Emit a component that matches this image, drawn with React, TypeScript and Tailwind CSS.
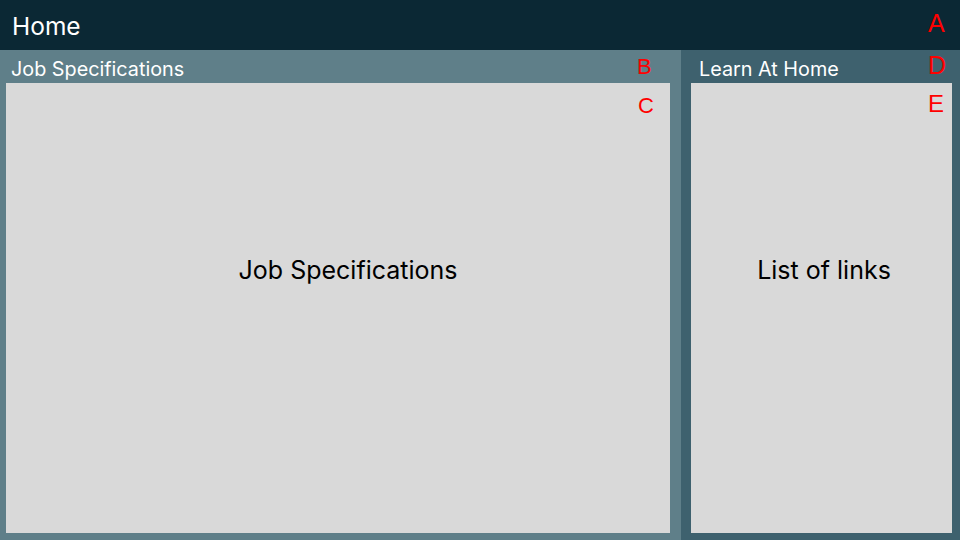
const label = "absolute leading-none text-[#ff0000] font-['Liberation_Sans',sans-serif]";

export default function App() {
  return (
    <div className="flex h-[540px] w-[960px] flex-col font-['Inter',sans-serif]">
      <header className="relative flex h-[50px] items-center bg-[#0b2834] pl-3 pt-[2px] text-[24.5px] text-white">
        Home
        <span className={`${label} left-[928px] top-[11px] text-[25px]`}>A</span>
      </header>
      <div className="flex flex-1">
        <section className="relative flex w-[681px] flex-col bg-[#5f7f89] pb-[7px] pl-[6px] pr-[11px]">
          <h2 className="h-[33px] pl-[5px] pt-[10px] text-[19.8px] leading-none text-white">Job Specifications</h2>
          <div className="relative flex-1 bg-[#d9d9d9] pl-[20px] pt-[169px] text-center text-[25px] text-black">
            Job Specifications
            <span className={`${label} left-[632px] top-[12px] text-[22px]`}>C</span>
          </div>
          <span className={`${label} left-[637px] top-[6px] text-[22px]`}>B</span>
        </section>
        <section className="relative flex flex-1 flex-col bg-[#3e616e] pb-[7px] pl-[10px] pr-[8px]">
          <h2 className="h-[33px] pl-[8px] pt-[10px] text-[19.8px] leading-none text-white">Learn At Home</h2>
          <div className="relative flex-1 bg-[#d9d9d9] pl-[5px] pt-[169px] text-center text-[25px] text-black">
            List of links
            <span className={`${label} left-[237px] top-[9px] text-[24px]`}>E</span>
          </div>
          <span className={`${label} left-[247px] top-[3px] text-[25px]`}>D</span>
        </section>
      </div>
    </div>
  );
}
